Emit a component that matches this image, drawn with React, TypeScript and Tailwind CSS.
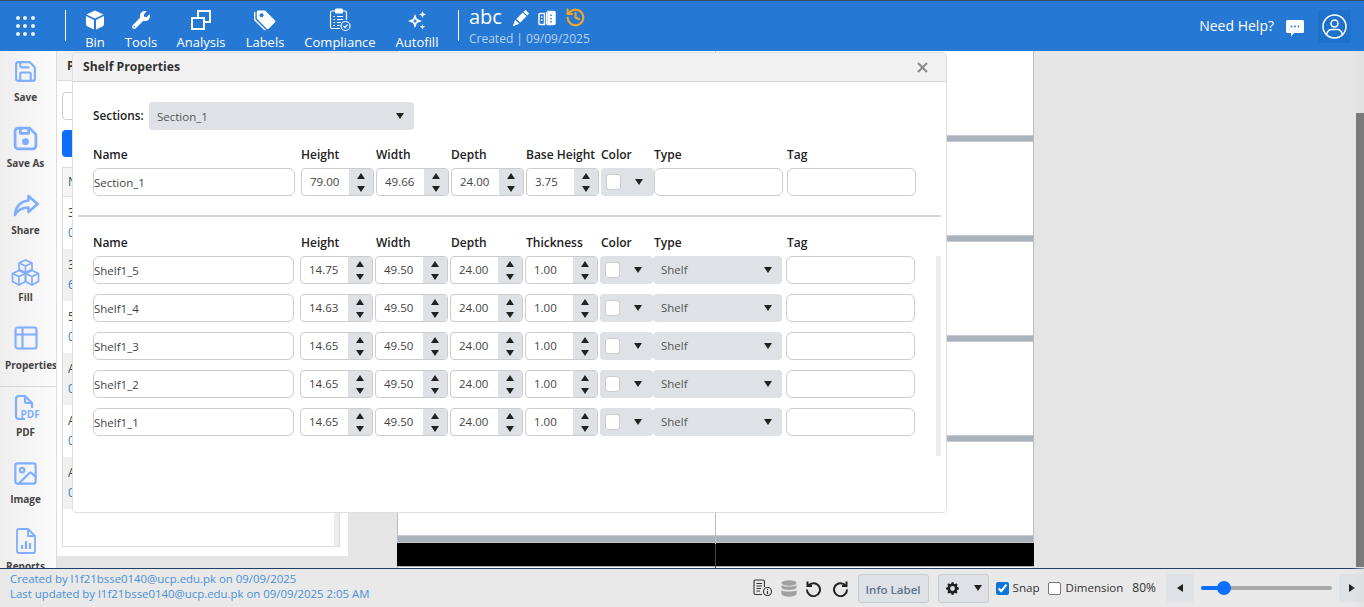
import React from "react";
import { Save, Table2, Image as ImageIcon, History } from "lucide-react";
import { BsPencilFill, BsTagsFill, BsGearFill } from "react-icons/bs";
import { FaWrench } from "react-icons/fa";

const FONT = { fontFamily: '"Open Sans", "Noto Sans", sans-serif' };

function HeaderItem({ w, label, children }: { w: string; label: string; children: React.ReactNode }) {
  return (
    <div className={`${w} flex flex-col items-center shrink-0`}>
      <div className="h-[24px] mt-[7px] flex items-center justify-center">{children}</div>
      <div className="text-[13px] leading-[18px] text-white mt-[1px] whitespace-nowrap">{label}</div>
    </div>
  );
}

const CubeIcon = () => (
  <svg width="20" height="20" viewBox="0 0 20 20">
    <path d="M10 0.5 18.5 4.5 10 8.5 1.5 4.5Z" fill="#fff" />
    <path d="M1 6 9 10V19.5L2.5 16.5Q1 15.7 1 14Z" fill="#fff" />
    <path d="M11 10 19 6V14Q19 15.7 17.5 16.5L11 19.5Z" fill="#fff" />
  </svg>
);

const AnalysisIcon = () => (
  <svg width="20" height="20" viewBox="0 0 20 20" fill="none" stroke="#fff" strokeWidth="2">
    <rect x="7" y="1" width="12" height="11" />
    <rect x="1" y="8" width="12" height="11" fill="#2578d3" />
  </svg>
);

const ComplianceIcon = () => (
  <svg width="22" height="24" viewBox="0 0 22 24" fill="none" stroke="#fff" strokeWidth="1.2">
    <path d="M7 3H3Q1.5 3 1.5 4.500V19Q1.500 20.500 3 20.500H11" />
    <path d="M13 3H16Q17.500 3 17.500 4.500V12" />
    <rect x="6.500" y="1" width="7" height="4" rx="1" fill="#fff" />
    <path d="M4.500 8.500H6M8 8.500H14M4.500 11.500H6M8 11.500H14M4.500 14.500H6M8 14.500H12M4.500 17.500H6M8 17.500H10.500" />
    <circle cx="16.500" cy="18" r="4.500" fill="#2578d3" />
    <path d="M14.500 18l1.500 1.500 2.500-3" />
  </svg>
);

const SparkIcon = () => (
  <svg width="20" height="20" viewBox="0 0 20 20" fill="#fff">
    <path fillRule="evenodd" d="M8 4 10 9 15 11 10 13 8 18 6 13 1 11 6 9ZM8 8.500 7.300 10.300 5.500 11 7.300 11.700 8 13.500 8.700 11.700 10.500 11 8.700 10.300Z" />
    <path d="M15.500 1 16.500 3.500 19 4.500 16.500 5.500 15.500 8 14.500 5.500 12 4.500 14.500 3.500Z" />
    <path d="M15.500 14 16.300 16 18.300 16.800 16.300 17.600 15.500 19.500 14.700 17.600 12.700 16.800 14.700 16Z" />
  </svg>
);

const BuildingIcon = () => (
  <svg width="18" height="16" viewBox="0 0 18 16" fill="none" stroke="#fff" strokeWidth="1.500">
    <path d="M6.500 3.500H2Q1 3.500 1 4.500V13.500Q1 14.500 2 14.500H6.500Z" />
    <path d="M10 1.500H16Q17 1.500 17 2.500V13.500Q17 14.500 16 14.500H10Z" fill="#fff" stroke="#fff" />
    <rect x="8" y="2" width="1" height="12.500" fill="#fff" stroke="none" />
    <path d="M13 4.500V6M13 8V9.500M13 11V12.500" stroke="#2578d3" />
    <path d="M3 7H4.500M3 10H4.500" stroke="#fff" />
  </svg>
);

const GridDots = () => (
  <div className="grid grid-cols-3 gap-[4px] w-[18px]">
    {Array.from({ length: 9 }).map((_, i) => (
      <span key={i} className="w-[4px] h-[4px] rounded-full bg-white opacity-90" />
    ))}
  </div>
);

function Header() {
  return (
    <header className="h-[51px] shrink-0 bg-[#2578d3] border-t border-[#3a4a5c] flex items-start text-white" style={FONT}>
      <div className="w-[50px] h-[50px] flex items-center justify-center shrink-0">
        <GridDots />
      </div>
      <div className="ml-[15px] mt-[9px] w-px h-[31px] bg-white shrink-0" />
      <div className="ml-[9px] flex">
        <HeaderItem w="w-[40px]" label="Bin"><CubeIcon /></HeaderItem>
        <HeaderItem w="w-[52px]" label="Tools"><FaWrench size={18} color="#fff" /></HeaderItem>
        <HeaderItem w="w-[68px]" label="Analysis"><AnalysisIcon /></HeaderItem>
        <HeaderItem w="w-[60px]" label="Labels"><BsTagsFill size={22} color="#fff" /></HeaderItem>
        <HeaderItem w="w-[90px]" label="Compliance"><ComplianceIcon /></HeaderItem>
        <HeaderItem w="w-[64px]" label="Autofill"><SparkIcon /></HeaderItem>
      </div>
      <div className="ml-[9px] mt-[9px] w-px h-[31px] bg-white shrink-0" />
      <div className="ml-[10px] flex flex-col shrink-0">
        <div className="flex items-center h-[28px] mt-[2px]">
          <span className="text-[20px] leading-[28px] text-white w-[44px]">abc</span>
          <BsPencilFill size={16} color="#fff" className="mt-[1px]" />
          <span className="ml-[9px] mt-[1px] flex"><BuildingIcon /></span>
          <History size={21} color="#f5a623" strokeWidth={2.4} className="ml-[9px] mt-[1px]" />
        </div>
        <div className="text-[12px] leading-[16px] text-[#b9d3f0] whitespace-nowrap">Created | 09/09/2025</div>
      </div>
      <div className="ml-auto flex items-center h-[50px]">
        <span className="text-[14px] text-white mb-[2px] -ml-[1px]">Need Help?</span>
        <svg width="18" height="18" viewBox="0 0 18 18" className="ml-[12px] mt-[3px]">
          <path d="M1.500 1H16.500Q18 1 18 2.500V12.500Q18 14 16.500 14H8L5 17.500V14H1.500Q0 14 0 12.500V2.500Q0 1 1.500 1Z" fill="#fff" />
          <circle cx="5.500" cy="7.500" r="0.900" fill="#2578d3" />
          <circle cx="9" cy="7.500" r="0.900" fill="#2578d3" />
          <circle cx="12.500" cy="7.500" r="0.900" fill="#2578d3" />
        </svg>
        <div className="ml-[14px] mr-[13px] w-[33px] h-[33px] bg-[#1f72cc] flex items-center justify-center">
          <svg width="25" height="25" viewBox="0 0 25 25" fill="none" stroke="#fff" strokeWidth="1.500">
            <circle cx="12.500" cy="12.500" r="11.500" />
            <circle cx="12.500" cy="9.500" r="3.500" />
            <path d="M4.500 20.500Q6 15.500 9.500 15.500H15.500Q19 15.500 20.500 20.500" />
          </svg>
        </div>
      </div>
    </header>
  );
}

const ICON = "#7fadff";

function SideItem({ label, mt, gap, shift, children }: { label: string; mt: string; gap: string; shift?: string; children: React.ReactNode }) {
  return (
    <div className={`${mt} w-[51px] flex flex-col items-center`}>
      <div className="h-[26px] flex items-center justify-center">{children}</div>
      <div className={`${gap} ${shift ?? ""} text-[10px] leading-[14px] font-bold text-[#444] whitespace-nowrap`}>{label}</div>
    </div>
  );
}

function Sidebar() {
  return (
    <aside className="w-[57px] shrink-0 bg-gradient-to-r from-[#eeeeee] to-[#fbfbfb] border-r border-[#dcdcdc] overflow-hidden" style={FONT}>
      <SideItem label="Save" mt="mt-[7px]" gap="mt-[6px]"><Save size={25} color={ICON} strokeWidth={2} /></SideItem>
      <SideItem label="Save As" mt="mt-[21px]" gap="mt-[5px]">
        <svg width="25" height="25" viewBox="0 0 24 24" fill="none" stroke={ICON} strokeWidth="2.600" strokeLinejoin="round">
          <path d="M5 2H16L22 8V19A3 3 0 0 1 19 22H5A3 3 0 0 1 2 19V5A3 3 0 0 1 5 2Z" />
          <path d="M7 2V7H15V2" />
          <circle cx="12" cy="15" r="2" fill={ICON} />
        </svg>
      </SideItem>
      <SideItem label="Share" mt="mt-[23px]" gap="mt-[4px]">
        <svg width="26" height="24" viewBox="0 0 26 24" fill="none" stroke={ICON} strokeWidth="2.600" strokeLinejoin="round">
          <path d="M15.500 2 24.500 10 15.500 18V13.500C9.500 13.500 5 15.500 2 21C2.500 13 7.500 7 15.500 6.500Z" />
        </svg>
      </SideItem>
      <SideItem label="Fill" mt="mt-[22px]" gap="mt-[5px]">
        <svg width="29" height="27" viewBox="0 0 29 27" fill="none" stroke={ICON} strokeWidth="1.700" strokeLinejoin="round">
          <path d="M14.500 1 21 4V10.500L14.500 13.500 8 10.500V4Z" />
          <path d="M8 4 14.500 7 21 4M14.500 7V13.500" />
          <path d="M8 11.500 14.500 14.500V22.500L8 26 1.500 22.500V14.500Z" />
          <path d="M1.500 14.500 8 17.500 14.500 14.500M8 17.500V26" />
          <path d="M21 11.500 27.500 14.500V22.500L21 26 14.500 22.500V14.500Z" />
          <path d="M14.500 14.500 21 17.500 27.500 14.500M21 17.500V26" />
        </svg>
      </SideItem>
      <SideItem label="Properties" mt="mt-[21px]" gap="mt-[7px]" shift="ml-[11px]"><Table2 size={28} color={ICON} strokeWidth={1.800} /></SideItem>
      <div className="mt-[14px] h-px bg-[#d8d8d8]" />
      <SideItem label="PDF" mt="mt-[8px]" gap="mt-[4px]">
        <div className="relative w-[26px] h-[26px]">
          <svg width="26" height="26" viewBox="0 0 26 26" fill="none" stroke={ICON} strokeWidth="2.200" strokeLinejoin="round">
            <path d="M12 24H6Q3 24 3 21V4Q3 1 6 1H12L19 8V13" />
            <path d="M12 1V6Q12 8 14 8H19" />
          </svg>
          <span className="absolute left-[8px] top-[14px] text-[10px] leading-[11px] font-bold text-[#7fadff]">PDF</span>
        </div>
      </SideItem>
      <SideItem label="Image" mt="mt-[21px]" gap="mt-[6px]"><ImageIcon size={27} color={ICON} strokeWidth={1.900} /></SideItem>
      <SideItem label="Reports" mt="mt-[22px]" gap="mt-[5px]">
        <svg width="22" height="26" viewBox="0 0 22 26" fill="none" stroke={ICON} strokeWidth="1.800" strokeLinejoin="round">
          <path d="M13 1H4Q2 1 2 3V23Q2 25 4 25H18Q20 25 20 23V8Z" />
          <path d="M13 1V8H20" />
          <path d="M7 21V17M11 21V13M15 21V15" strokeWidth="2.200" />
        </svg>
      </SideItem>
    </aside>
  );
}

function PanelRow({ a, b, alt }: { a: string; b: string; alt?: boolean }) {
  return (
    <div className={`h-[52px] pl-[5px] pt-[6px] text-[12px] leading-[20px] ${alt ? "bg-[#f0f0f0]" : "bg-white"}`}>
      <div className="text-[#444]">{a}</div>
      <div className="text-[#2a7fc9]">{b}</div>
    </div>
  );
}

function LeftPanel() {
  return (
    <section className="w-[291px] h-[505px] shrink-0 bg-white relative" style={FONT}>
      <div className="h-[30px] bg-[#f1f1f1] border-b border-[#dedede] pl-[10px] text-[12px] leading-[30px] font-bold text-[#333]">P</div>
      <div className="ml-[5px] mt-[11px] w-[270px] h-[28px] border border-[#ccc] rounded-[4px]" />
      <div className="ml-[5px] mt-[10px] w-[100px] h-[27px] bg-[#0d6efd] rounded-[4px]" />
      <div className="ml-[5px] mt-[10px] w-[278px] h-[380px] border border-[#dddddd] flex">
        <div className="flex-1">
          <div className="h-[29px] bg-[#f5f5f5] border-b border-[#e2e2e2] pl-[5px] text-[12px] leading-[28px] text-[#1a6a5a]">N</div>
          <PanelRow a="3" b="0" />
          <PanelRow a="3" b="6" alt />
          <PanelRow a="5" b="0" />
          <PanelRow a="A" b="0" alt />
          <PanelRow a="A" b="0" />
          <PanelRow a="A" b="0" alt />
        </div>
        <div className="w-[5px] bg-[#ececec]" />
      </div>
    </section>
  );
}

function Bar() {
  return <div className="h-[7px] bg-[#aab2bb] border-y border-[#c4c9cf]" />;
}

function CanvasCol({ black }: { black: string }) {
  return (
    <div className="flex-1 flex flex-col">
      <div className="h-[84px]" />
      <Bar />
      <div className="h-[93px]" />
      <Bar />
      <div className="h-[93px]" />
      <Bar />
      <div className="h-[93px]" />
      <Bar />
      <div className="h-[93px]" />
      <div className="h-[8px] bg-[#aab2bb] border-y border-[#c4c9cf]" />
      <div className={`h-[23px] bg-black ${black}`} />
      <div className="h-px bg-[#aaa]" />
    </div>
  );
}

function Canvas() {
  return (
    <section className="ml-[49px] w-[637px] bg-white border-x border-[#bcbcbc] flex shrink-0 h-[517px]">
      <CanvasCol black="-ml-px" />
      <div className="w-px flex flex-col">
        <div className="flex-1 bg-[#b8bec4]" />
        <div className="h-[24px] bg-[#444]" />
      </div>
      <CanvasCol black="-mr-px" />
    </section>
  );
}

const Up = () => <span className="block w-0 h-0 border-x-[4px] border-x-transparent border-b-[6px] border-b-[#222]" />;
const Down = () => <span className="block w-0 h-0 border-x-[4px] border-x-transparent border-t-[6px] border-t-[#222]" />;

function NumberField({ value }: { value: string }) {
  return (
    <div className="w-[73px] h-[28px] border border-[#ccc] rounded-[4px] flex overflow-hidden bg-white shrink-0">
      <input readOnly value={value} className="flex-1 min-w-0 pl-[8px] text-[11.5px] text-[#444] outline-none bg-transparent" />
      <div className="w-[24px] bg-[#dee2e6] flex flex-col items-center justify-center gap-[7px]">
        <Up />
        <Down />
      </div>
    </div>
  );
}

function ColorField() {
  return (
    <div className="w-[53px] h-[28px] bg-[#dee2e6] rounded-[4px] flex items-center pl-[5px] shrink-0">
      <span className="w-[15px] h-[16px] bg-white border border-[#ccc] rounded-[3px]" />
      <span className="ml-[14px]"><Down /></span>
    </div>
  );
}

function TextField({ w, value = "" }: { w: string; value?: string }) {
  return (
    <input
      readOnly
      value={value}
      className={`${w} h-[28px] border border-[#ccc] rounded-[6px] text-[11.5px] text-[#444] outline-none bg-white shrink-0`}
    />
  );
}

function TypeSelect() {
  return (
    <div className="w-[129px] h-[28px] bg-[#dee2e6] rounded-[4px] flex items-center pl-[8px] pr-[10px] justify-between text-[11.5px] text-[#555] shrink-0">
      <span>Shelf</span>
      <Down />
    </div>
  );
}

function Labels({ fifth }: { fifth: string }) {
  const cols: [string, string][] = [
    ["w-[208px]", "Name"],
    ["w-[75px]", "Height"],
    ["w-[75px]", "Width"],
    ["w-[75px]", "Depth"],
    ["w-[75px]", fifth],
    ["w-[53px]", "Color"],
    ["w-[133px]", "Type"],
    ["w-[100px]", "Tag"],
  ];
  return (
    <div className="flex h-[18px] text-[12px] leading-[18px] font-semibold text-[#222]">
      {cols.map(([w, t]) => (
        <span key={t} className={`${w} shrink-0 whitespace-nowrap`}>{t}</span>
      ))}
    </div>
  );
}

function ShelfRow({ name, h }: { name: string; h: string }) {
  return (
    <div className="flex">
      <TextField w="w-[201px]" value={name} />
      <div className="ml-[6px] flex gap-[2px]">
        <NumberField value={h} />
        <NumberField value="49.50" />
        <NumberField value="24.00" />
        <NumberField value="1.00" />
      </div>
      <div className="ml-[2px] flex">
        <ColorField />
        <TypeSelect />
      </div>
      <div className="ml-[4px]">
        <TextField w="w-[129px]" />
      </div>
    </div>
  );
}

function Modal() {
  return (
    <div className="absolute left-[72px] top-[52px] w-[875px] h-[461px] bg-white border border-[#dfdfdf] rounded-[4px] overflow-hidden" style={FONT}>
      <div className="h-[29px] bg-[#f1f1f1] border-b border-[#d6d6d6] flex items-center justify-between pl-[10px] pr-[18px]">
        <span className="text-[12.2px] font-bold text-[#333] mt-[1px]">Shelf Properties</span>
        <svg width="11" height="11" viewBox="0 0 11 11" stroke="#8c8c8c" strokeWidth="2.200">
          <path d="M1 1 10 10M10 1 1 10" />
        </svg>
      </div>
      <div className="pl-[20px] pt-[20px]">
        <div className="flex h-[28px]">
          <span className="w-[56px] text-[11.8px] leading-[26px] font-semibold text-[#222]">Sections:</span>
          <div className="w-[265px] bg-[#dee2e6] rounded-[4px] flex items-center justify-between pl-[8px] pr-[10px] text-[11.5px] text-[#555]">
            <span className="mt-[1px]">Section_1</span>
            <Down />
          </div>
        </div>
        <div className="mt-[16px]"><Labels fifth="Base Height" /></div>
        <div className="mt-[4px] flex">
          <TextField w="w-[202px]" value="Section_1" />
          <div className="ml-[6px] flex gap-[2px]">
            <NumberField value="79.00" />
            <NumberField value="49.66" />
            <NumberField value="24.00" />
            <NumberField value="3.75" />
          </div>
          <div className="ml-[2px] flex">
            <ColorField />
            <TextField w="w-[129px]" />
          </div>
          <div className="ml-[4px]"><TextField w="w-[129px]" /></div>
        </div>
      </div>
      <div className="mt-[19px] ml-[5px] w-[863px] h-[2px] bg-[#d6d6d6]" />
      <div className="pl-[20px] mt-[17px]">
        <Labels fifth="Thickness" />
        <div className="mt-[4px] flex">
          <div className="flex flex-col gap-[10px]">
            <ShelfRow name="Shelf1_5" h="14.75" />
            <ShelfRow name="Shelf1_4" h="14.63" />
            <ShelfRow name="Shelf1_3" h="14.65" />
            <ShelfRow name="Shelf1_2" h="14.65" />
            <ShelfRow name="Shelf1_1" h="14.65" />
          </div>
          <div className="ml-[21px] w-[5px] h-[200px] bg-[#eeeeee]" />
        </div>
      </div>
    </div>
  );
}

function Footer() {
  return (
    <footer className="h-[39px] shrink-0 bg-[#e9e9e9] border-t border-[#1f3f66] flex items-center" style={FONT}>
      <div className="pl-[10px] mb-[5px] text-[11.4px] leading-[15px] text-[#4a90d6] whitespace-nowrap">
        <div>Created by l1f21bsse0140@ucp.edu.pk on 09/09/2025</div>
        <div>Last updated by l1f21bsse0140@ucp.edu.pk on 09/09/2025 2:05 AM</div>
      </div>
      <div className="ml-auto flex items-center shrink-0">
        <svg width="20" height="18" viewBox="0 0 20 18" fill="none" stroke="#333" strokeWidth="1.100">
          <path d="M9 15.500H2.500Q1 15.500 1 14V2.500Q1 1 2.500 1H10Q11.500 1 11.500 2.500V8" />
          <path d="M3.500 4.500H9M3.500 7H9M3.500 9.500H8M3.500 12H7" />
          <circle cx="14.500" cy="12.500" r="4" />
          <path d="M14.500 12V15M14.500 10V11" />
        </svg>
        <svg width="16" height="17" viewBox="0 0 16 17" className="ml-[8px]" fill="#a0a0a0">
          <ellipse cx="8" cy="3" rx="7.500" ry="2.800" />
          <path d="M0.500 5C2 7 14 7 15.500 5V8C14 10.500 2 10.500 0.500 8Z" />
          <path d="M0.500 10C2 12 14 12 15.500 10V14C14 17.500 2 17.500 0.500 14Z" />
        </svg>
        <svg width="17" height="17" viewBox="0 0 17 17" className="ml-[8px]" fill="none" stroke="#222" strokeWidth="2">
          <path d="M3.500 5.500A6.500 6.500 0 1 1 2 9.500" />
          <path d="M2.500 1.500V6H7" />
        </svg>
        <svg width="17" height="17" viewBox="0 0 17 17" className="ml-[10px]" fill="none" stroke="#222" strokeWidth="2">
          <path d="M13.500 5.500A6.500 6.500 0 1 0 15 9.500" />
          <path d="M14.500 1.500V6H10" />
        </svg>
        <div className="ml-[9px] w-[71px] h-[29px] bg-[#dee2e6] border border-[#c8ccd0] rounded-[3px] text-[11.500px] leading-[29px] text-center text-[#5a7390] font-semibold">Info Label</div>
        <div className="ml-[9px] w-[51px] h-[29px] bg-[#dee2e6] border border-[#c8ccd0] rounded-[3px] flex items-center pl-[7px]">
          <BsGearFill size={13} color="#222" />
          <span className="ml-[15px]"><Down /></span>
        </div>
        <input type="checkbox" readOnly checked className="ml-[7px] w-[13px] h-[13px] accent-[#0b76d8]" />
        <span className="ml-[4px] text-[11.6px] text-[#333]">Snap</span>
        <span className="ml-[8px] w-[13px] h-[13px] bg-white border border-[#777] rounded-[2px]" />
        <span className="ml-[5px] text-[11.5px] text-[#333]">Dimension</span>
        <span className="ml-[9px] text-[12px] text-[#333]">80%</span>
        <div className="ml-[10px] w-[28px] h-[28px] bg-[#dee2e6] rounded-[3px] flex items-center justify-center">
          <span className="block w-0 h-0 border-y-[4px] border-y-transparent border-r-[6px] border-r-[#222]" />
        </div>
        <div className="ml-[7px] w-[131px] h-[4px] bg-[#a8a8a8] rounded-full relative">
          <div className="w-[22px] h-[4px] bg-[#0d6efd] rounded-l-full" />
          <div className="absolute left-[16px] top-[-5px] w-[14px] h-[14px] bg-[#0d6efd] rounded-full" />
        </div>
        <div className="ml-[7px] w-[25px] h-[28px] bg-[#dee2e6] rounded-l-[3px] flex items-center justify-center">
          <span className="block w-0 h-0 border-y-[4px] border-y-transparent border-l-[6px] border-l-[#222]" />
        </div>
      </div>
    </footer>
  );
}

export default function App() {
  return (
    <div className="relative w-[1364px] h-[607px] overflow-hidden bg-[#e5e5e5]">
      <Header />
      <main className="h-[517px] flex overflow-hidden">
        <Sidebar />
        <LeftPanel />
        <Canvas />
      </main>
      <Footer />
      <Modal />
      <div className="absolute right-0 top-[51px] w-[13px] h-[556px] bg-gradient-to-r from-[#e5e5e5]/0 to-[#dddddd]/60" />
      <div className="absolute right-0 top-[113px] w-[8px] h-[454px] bg-[#7a7a7a]" />
    </div>
  );
}
